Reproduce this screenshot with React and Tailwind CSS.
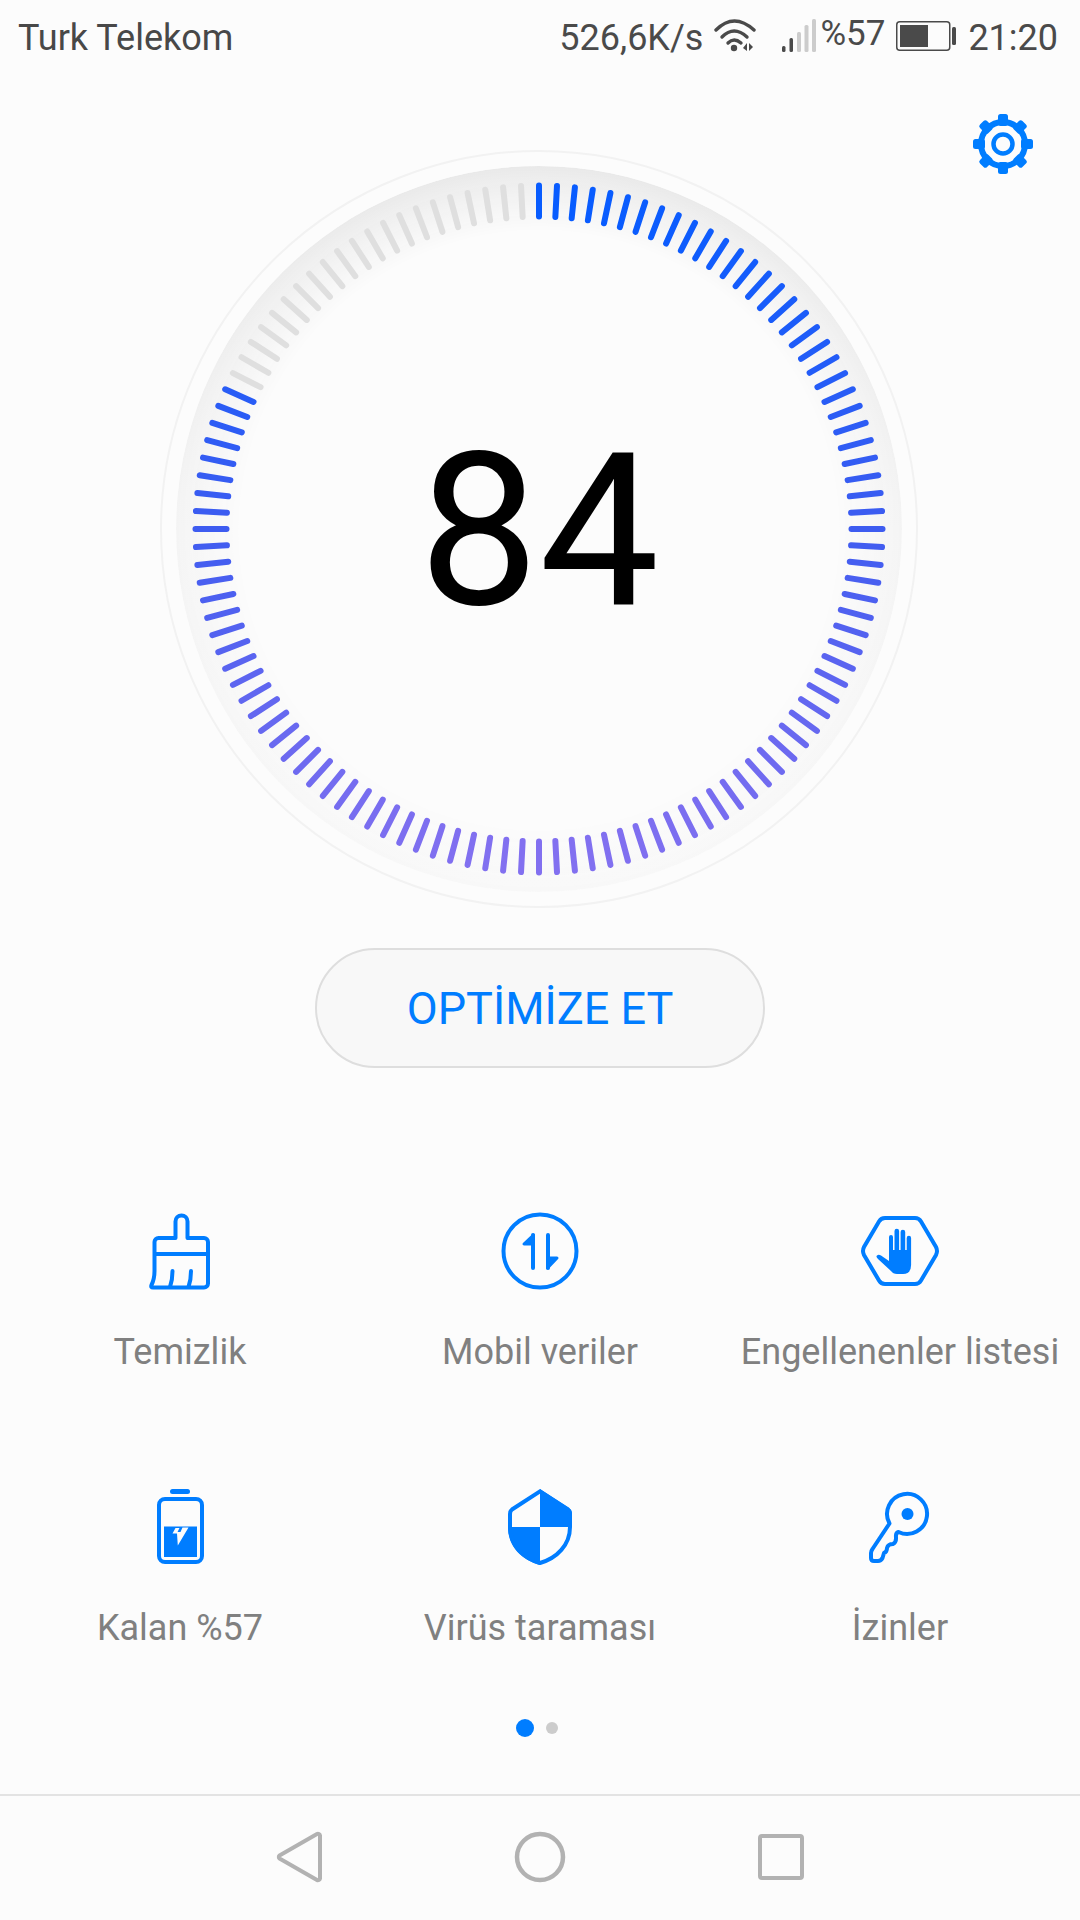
const BLUE = '#007dff';

// vertical colour ramp used by the gauge ticks
const tickColor = (y) => {
  const stops = [
    [0, [8, 92, 255]],
    [0.5, [62, 92, 240]],
    [1, [130, 112, 240]],
  ];
  const t = Math.min(1, Math.max(0, y));
  const [a, b] = t < 0.5 ? [stops[0], stops[1]] : [stops[1], stops[2]];
  const k = (t - a[0]) / (b[0] - a[0]);
  const c = a[1].map((v, i) => Math.round(v + (b[1][i] - v) * k));
  return `rgb(${c[0]},${c[1]},${c[2]})`;
};

function Gauge() {
  const ticks = [];
  for (let i = 0; i < 120; i++) {
    const a = (i * 3 * Math.PI) / 180;
    const s = Math.sin(a);
    const c = Math.cos(a);
    const active = i < 99;
    ticks.push(
      <line
        key={i}
        x1={378 + s * 312.5}
        y1={378 - c * 312.5}
        x2={378 + s * 343.5}
        y2={378 - c * 343.5}
        stroke={active ? tickColor((1 - c) / 2) : '#dfdfdf'}
        strokeWidth="6"
        strokeLinecap="round"
      />
    );
  }
  return (
    <svg width="756" height="756" viewBox="0 0 756 756" className="block overflow-visible">
      <defs>
        <linearGradient id="band" x1="0" y1="0" x2="0" y2="1">
          <stop offset="0" stopColor="#e9e9e9" />
          <stop offset="0.5" stopColor="#f4f4f4" />
          <stop offset="1" stopColor="#f8f8f8" />
        </linearGradient>
        <radialGradient id="fade" gradientUnits="userSpaceOnUse" cx="378" cy="378" r="363">
          <stop offset="0.82" stopColor="#000" />
          <stop offset="1" stopColor="#fff" />
        </radialGradient>
        <mask id="bandMask">
          <circle cx="378" cy="378" r="363" fill="url(#fade)" />
        </mask>
      </defs>
      <circle cx="378" cy="378" r="378" fill="none" stroke="#f2f2f2" strokeWidth="2" />
      <circle cx="378" cy="378" r="363" fill="url(#band)" mask="url(#bandMask)" />
      {ticks}
    </svg>
  );
}

function Gear() {
  const teeth = [];
  for (let i = 0; i < 8; i++) {
    teeth.push(<rect key={i} x="25" y="0" width="10" height="12" rx="2.5" transform={`rotate(${i * 45} 30 30)`} fill={BLUE} />);
  }
  return (
    <svg width="60" height="60" viewBox="0 0 60 60">
      {teeth}
      <circle cx="30" cy="30" r="22" fill="none" stroke={BLUE} strokeWidth="6" />
      <circle cx="30" cy="30" r="9.5" fill="none" stroke={BLUE} strokeWidth="4.5" />
    </svg>
  );
}

function BrushIcon() {
  return (
    <svg width="80" height="90" viewBox="0 0 80 90" fill="none" stroke={BLUE} strokeWidth="4" strokeLinecap="round" strokeLinejoin="round">
      <path d="M35.5 32 V15.5 a5.5 5.5 0 0 1 12 0 V32 H64 a4 4 0 0 1 4 4 V77.5 a4 4 0 0 1 -4 4 H13 q-2.5 0 -1.5 -2.5 q3 -6 3 -14 V36 a4 4 0 0 1 4 -4 Z" />
      <path d="M15 48 H68" />
      <path d="M32.5 65 q0 9 -2.5 16" />
      <path d="M51 65 q0 9 -2.5 16" />
    </svg>
  );
}

function ArrowsIcon() {
  return (
    <svg width="90" height="90" viewBox="0 0 90 90" fill="none">
      <circle cx="45" cy="45" r="36.5" stroke={BLUE} strokeWidth="4" />
      <path d="M38 29 V62 M53 29 V62" stroke={BLUE} strokeWidth="4" strokeLinecap="round" />
      <path d="M38.5 29 L29 38 H38.5 Z M52.5 62 L62 52 H52.5 Z" fill={BLUE} stroke={BLUE} strokeWidth="3" strokeLinejoin="round" />
    </svg>
  );
}

function HandIcon() {
  return (
    <svg width="90" height="90" viewBox="0 0 90 90" fill="none">
      <path d="M30 12 H60 Q64 12 66 15.5 L81 41 Q83 45 81 49 L66 74.5 Q64 78 60 78 H30 Q26 78 24 74.5 L9 49 Q7 45 9 41 L24 15.5 Q26 12 30 12 Z" stroke={BLUE} strokeWidth="4" />
      <path d="M34 31 a2 2 0 0 1 4 0 V44 h1.5 V25 a2.3 2.3 0 0 1 4.6 0 V44 h1.5 V26 a2.3 2.3 0 0 1 4.6 0 V44 h1.5 V32 a2.2 2.2 0 0 1 4.4 0 V59 q0 9 -8 9 H42 q-4 0 -6 -3 L23 53 q-2.5 -2.5 -1 -3.5 q1.5 -1.5 4 0 L34 55 Z" fill={BLUE} />
    </svg>
  );
}

function BatteryIcon() {
  return (
    <svg width="80" height="90" viewBox="0 0 80 90" fill="none">
      <rect x="30" y="7" width="20" height="5" rx="2.5" fill={BLUE} />
      <rect x="19" y="17" width="43" height="63" rx="6" stroke={BLUE} strokeWidth="4" />
      <rect x="24" y="44.5" width="33" height="30.5" fill={BLUE} />
      <path d="M35.5 46 L32.5 51.5 H37 L37.8 63.5 L48.5 45.5 H42.5 L40.5 50 H37.5 L39.5 46 Z" fill="#fcfcfc" />
    </svg>
  );
}

function ShieldIcon() {
  return (
    <svg width="64" height="76" viewBox="0 0 64 76" fill="none">
      <path d="M32 0 L61 19 Q64 21 64 25 V38 H32 Z" fill={BLUE} />
      <path d="M0 38 H32 V76 C14 71 0 58 0 38 Z" fill={BLUE} />
      <path d="M32 2.4 L60 20.5 Q62 22 62 25 V38 C62 56 49 69 32 74 C15 69 2 56 2 38 V25 Q2 22 4 20.5 Z" stroke={BLUE} strokeWidth="4" />
    </svg>
  );
}

function KeyIcon() {
  return (
    <svg width="80" height="90" viewBox="0 0 80 90" fill="none">
      <path d="M29.5 41.5 A20 20 0 1 1 38.5 50 Q35.5 51 36 55 Q36.5 60 33 62 Q28 62 27 66 Q27 70 24 71 L22.5 76 Q21 79 18 79 H14 Q11 79 11 76 V71 Q11 69 12.5 67 Z" stroke={BLUE} strokeWidth="4" strokeLinejoin="round" />
      <circle cx="47.5" cy="32" r="6" fill={BLUE} />
    </svg>
  );
}

function WifiSignal() {
  return (
    <svg width="130" height="50" viewBox="0 0 130 50" fill="none">
      <g stroke="#4a4a4a" strokeWidth="3.4" strokeLinecap="round">
        <path d="M14 20 Q32 2 52 20" />
        <path d="M20 27 Q32 15 45 27" />
        <path d="M26 33 Q32 27 39 33" />
      </g>
      <circle cx="32" cy="38" r="3.2" fill="#4a4a4a" />
      <path d="M41 38 L45 33 V41 Z M47 33 V41 L51 37 Z" fill="#4a4a4a" />
      <rect x="80" y="36" width="3.5" height="6" rx="1.5" fill="#4a4a4a" />
      <rect x="87.5" y="28" width="3.5" height="14" rx="1.5" fill="#4a4a4a" />
      <rect x="95" y="22" width="4" height="20" rx="1.5" fill="#cccccc" />
      <rect x="102.5" y="15" width="4" height="27" rx="1.5" fill="#cccccc" />
      <rect x="110" y="9" width="4" height="33" rx="1.5" fill="#cccccc" />
    </svg>
  );
}

function BatteryStatus() {
  return (
    <svg width="60" height="30" viewBox="0 0 60 30" fill="none">
      <rect x="0.75" y="0.75" width="53" height="28.5" rx="3" stroke="#4a4a4a" strokeWidth="1.5" />
      <rect x="4" y="4" width="28" height="22" fill="#4a4a4a" />
      <rect x="56" y="6" width="4" height="18" rx="1.5" fill="#4a4a4a" />
    </svg>
  );
}

const shortcuts = [
  { label: 'Temizlik', icon: <BrushIcon /> },
  { label: 'Mobil veriler', icon: <ArrowsIcon /> },
  { label: 'Engellenenler listesi', icon: <HandIcon /> },
  { label: 'Kalan %57', icon: <BatteryIcon /> },
  { label: 'Virüs taraması', icon: <ShieldIcon /> },
  { label: 'İzinler', icon: <KeyIcon /> },
];

export default function App() {
  return (
    <div className="relative flex flex-col w-[1080px] h-[1920px] bg-[#fcfcfc] font-['Roboto',sans-serif] overflow-hidden">
      {/* status bar */}
      <div className="flex items-center h-[72px] pl-[18px] text-[#4a4a4a] text-[36px] leading-none whitespace-nowrap">
        <span className="pt-[4px] text-[#484848]">Turk Telekom</span>
        <span className="ml-[326px] pt-[4px]">526,6K/s</span>
        <span className="ml-[-1px] mt-[-2px]"><WifiSignal /></span>
        <span className="ml-[-12px] mt-[-5px] text-[35px]">%57</span>
        <span className="ml-[11px] mt-[-1px]"><BatteryStatus /></span>
        <span className="ml-[12px] pt-[4px]">21:20</span>
      </div>

      <div className="absolute left-[973px] top-[114px]"><Gear /></div>

      {/* score */}
      <div className="relative w-[756px] ml-[161px] mt-[79px]">
        <Gauge />
        <div className="absolute inset-0 flex items-center justify-center text-black text-[214px] leading-none pt-[4px]">84</div>
      </div>

      <button className="self-center mt-[41px] w-[450px] h-[120px] rounded-full border-2 border-[#dedede] bg-[#f8f8f8] text-[#007dff] text-[45px] pt-[2px]">
        OPTİMİZE ET
      </button>

      {/* shortcut grid */}
      <div className="grid grid-cols-3 mt-[138px]">
        {shortcuts.map((s) => (
          <div key={s.label} className="flex flex-col items-center h-[276px]">
            <div className="flex items-center justify-center h-[90px]">{s.icon}</div>
            <div className="mt-[36px] text-[36px] leading-[40px] text-[#808080] whitespace-nowrap">{s.label}</div>
          </div>
        ))}
      </div>

      {/* pager */}
      <div className="absolute left-0 right-0 top-[1719px] flex items-center justify-center gap-[12px] h-[18px] pr-[6px]">
        <span className="w-[18px] h-[18px] rounded-full bg-[#007dff]" />
        <span className="w-[12px] h-[12px] rounded-full bg-[#cccccc]" />
      </div>

      {/* nav bar */}
      <div className="absolute left-0 right-0 bottom-0 h-[126px] border-t-2 border-[#e3e3e3] flex items-center justify-center gap-[192px] pb-[2px]">
        <svg width="46" height="52" viewBox="0 0 46 52" fill="none">
          <path d="M41 3 a2 2 0 0 1 3 1.5 V47.5 a2 2 0 0 1 -3 1.5 L3.5 27.5 a2 2 0 0 1 0 -3 Z" stroke="#b2b2b2" strokeWidth="4" strokeLinejoin="round" />
        </svg>
        <svg width="52" height="52" viewBox="0 0 52 52" fill="none">
          <circle cx="26" cy="26" r="23" stroke="#b2b2b2" strokeWidth="4.5" />
        </svg>
        <svg width="46" height="46" viewBox="0 0 46 46" fill="none">
          <rect x="2" y="2" width="42" height="42" rx="2" stroke="#b2b2b2" strokeWidth="4" />
        </svg>
      </div>
    </div>
  );
}
